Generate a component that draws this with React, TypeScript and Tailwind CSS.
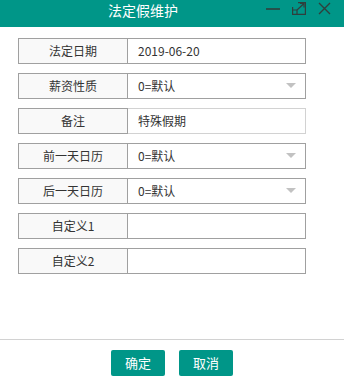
const font = { fontFamily: '"Microsoft YaHei", "Noto Sans CJK SC", sans-serif' };

type Row = { label: string; value?: string; select?: boolean; light?: boolean };

const rows: Row[] = [
  { label: '法定日期', value: '2019-06-20' },
  { label: '薪资性质', value: '0=默认', select: true },
  { label: '备注', value: '特殊假期', light: true },
  { label: '前一天日历', value: '0=默认', select: true },
  { label: '后一天日历', value: '0=默认', select: true },
  { label: '自定义1' },
  { label: '自定义2' },
];

function FieldRow({ label, value, select, light }: Row) {
  return (
    <div className="flex h-[26px] w-[288px] border border-[#a0a0a0] text-[12px] text-[#333]">
      <div className="flex w-[109px] items-center justify-center border-r border-[#a0a0a0] bg-[#f9f9f9]">
        {label}
      </div>
      <div
        className={
          'relative flex flex-1 items-center bg-white pl-[10px] ' +
          (light ? '-my-px -mr-px border border-l-0 border-[#d2d2d2]' : '')
        }
      >
        {value}
        {select && (
          <span className="absolute right-[9px] top-[9px] h-0 w-0 border-x-[5px] border-t-[5px] border-x-transparent border-t-[#c2c2c2]" />
        )}
      </div>
    </div>
  );
}

export default function App() {
  return (
    <div className="flex h-[382px] w-[344px] flex-col bg-white" style={font}>
      <div className="relative flex h-[27px] items-start justify-center bg-[#009688] pt-[2px]">
        <span className="ml-[-58px] text-[14px] leading-[16px] text-white">法定假维护</span>
        <div className="absolute right-[13px] top-[2px] flex items-center gap-[12px]">
          <svg width="14" height="13" viewBox="0 0 14 13">
            <path d="M0 7h14" stroke="#2f3f3d" strokeWidth="1.6" />
          </svg>
          <svg width="14" height="13" viewBox="0 0 14 13" fill="none" stroke="#2f3f3d" strokeWidth="1.2">
            <path d="M0.6 5V12.4H13.4V0.6H6" />
            <path d="M0.6 8H5V12.4" />
            <path d="M5 8L12 1.5M8 1.5H12V5.5" />
          </svg>
          <svg width="13" height="13" viewBox="0 0 13 13" stroke="#2f3f3d" strokeWidth="1.4">
            <path d="M1 1L12 12M12 1L1 12" />
          </svg>
        </div>
      </div>
      <div className="flex flex-1 flex-col gap-[9px] pl-[18px] pt-[11px]">
        {rows.map((r) => (
          <FieldRow key={r.label} {...r} />
        ))}
      </div>
      <div className="flex h-[43px] items-start justify-center gap-[14px] border-t border-[#d2d2d2] pt-[10px]">
        <button className="h-[26px] w-[54px] rounded-[2px] bg-[#009688] text-[13px] text-white">确定</button>
        <button className="h-[26px] w-[54px] rounded-[2px] bg-[#009688] text-[13px] text-white">取消</button>
      </div>
    </div>
  );
}
